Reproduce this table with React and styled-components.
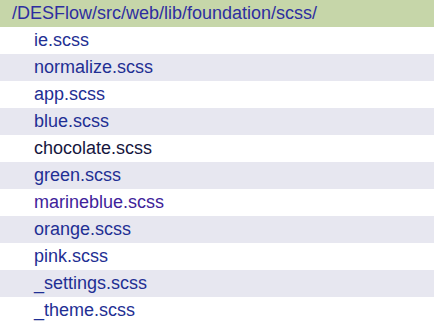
import React from 'react'
import styled, { createGlobalStyle } from 'styled-components'

const Global = createGlobalStyle`
  body {
    margin: 0;
    background: #fff;
    font-family: "Liberation Sans", Arial, sans-serif;
  }
`

const files = [
  { name: 'ie.scss' },
  { name: 'normalize.scss' },
  { name: 'app.scss' },
  { name: 'blue.scss' },
  { name: 'chocolate.scss', tone: 'dark' },
  { name: 'green.scss' },
  { name: 'marineblue.scss', tone: 'visited' },
  { name: 'orange.scss' },
  { name: 'pink.scss' },
  { name: '_settings.scss' },
  { name: '_theme.scss' },
]

const tones = {
  dark: '#16163e',
  visited: '#40229a',
  normal: '#1f2f94',
}

const List = styled.div`
  width: 434px;
  display: flex;
  flex-direction: column;
`

const Header = styled.div`
  height: 27px;
  display: flex;
  align-items: center;
  padding-left: 12px;
  background: #c6d6a9;
  color: #2e2ea0;
  font-size: 18px;
`

const Row = styled.div`
  height: 27px;
  display: flex;
  align-items: center;
  padding-left: 34px;
  background: ${p => (p.$odd ? '#e7e7f0' : '#ffffff')};
  color: ${p => tones[p.$tone || 'normal']};
  font-size: 18px;
`

export default function App() {
  return (
    <>
      <Global />
      <List>
        <Header>/DESFlow/src/web/lib/foundation/scss/</Header>
        {files.map((f, i) => (
          <Row key={f.name} $odd={i % 2 === 1} $tone={f.tone}>
            {f.name}
          </Row>
        ))}
      </List>
    </>
  )
}
